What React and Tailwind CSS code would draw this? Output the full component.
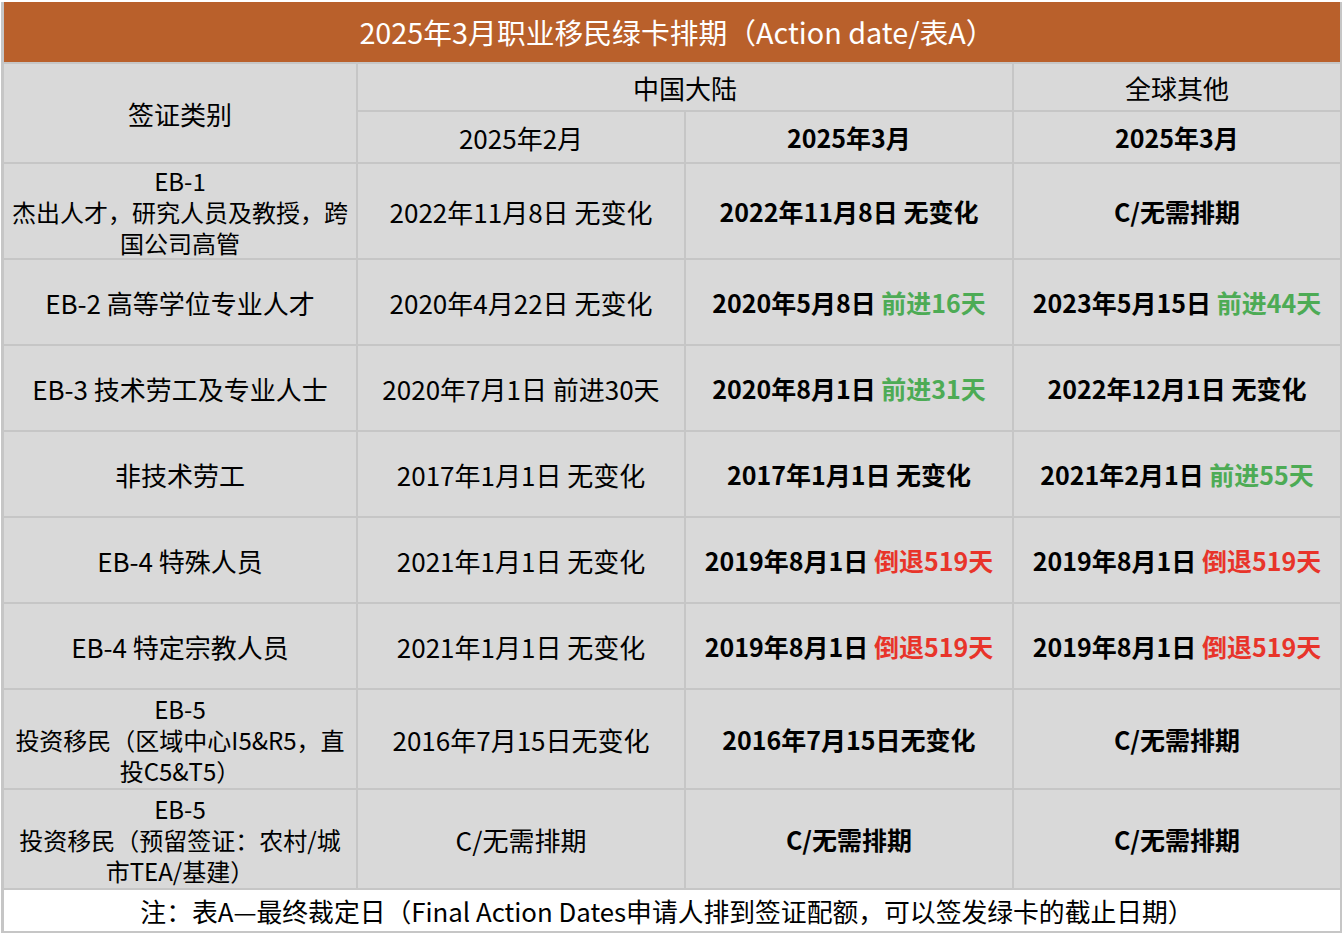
const G = ({ children }) => <span className="text-[#4dab55]">{children}</span>;
const R = ({ children }) => <span className="text-[#e8342a]">{children}</span>;

const rows = [
  {
    h: "h-[94px]",
    small: true,
    label: (
      <>
        EB-1
        <br />
        杰出人才，研究人员及教授，跨
        <br />
        国公司高管
      </>
    ),
    feb: "2022年11月8日 无变化",
    cn: "2022年11月8日 无变化",
    row: "C/无需排期",
  },
  {
    h: "h-[84px]",
    label: "EB-2 高等学位专业人才",
    feb: "2020年4月22日 无变化",
    cn: (
      <>
        2020年5月8日 <G>前进16天</G>
      </>
    ),
    row: (
      <>
        2023年5月15日 <G>前进44天</G>
      </>
    ),
  },
  {
    h: "h-[84px]",
    label: "EB-3 技术劳工及专业人士",
    feb: "2020年7月1日 前进30天",
    cn: (
      <>
        2020年8月1日 <G>前进31天</G>
      </>
    ),
    row: "2022年12月1日 无变化",
  },
  {
    h: "h-[84px]",
    label: "非技术劳工",
    feb: "2017年1月1日 无变化",
    cn: "2017年1月1日 无变化",
    row: (
      <>
        2021年2月1日 <G>前进55天</G>
      </>
    ),
  },
  {
    h: "h-[84px]",
    label: "EB-4 特殊人员",
    feb: "2021年1月1日 无变化",
    cn: (
      <>
        2019年8月1日 <R>倒退519天</R>
      </>
    ),
    row: (
      <>
        2019年8月1日 <R>倒退519天</R>
      </>
    ),
  },
  {
    h: "h-[84px]",
    label: "EB-4 特定宗教人员",
    feb: "2021年1月1日 无变化",
    cn: (
      <>
        2019年8月1日 <R>倒退519天</R>
      </>
    ),
    row: (
      <>
        2019年8月1日 <R>倒退519天</R>
      </>
    ),
  },
  {
    h: "h-[98px]",
    small: true,
    label: (
      <>
        EB-5
        <br />
        投资移民（区域中心I5&amp;R5，直
        <br />
        投C5&amp;T5）
      </>
    ),
    feb: "2016年7月15日无变化",
    cn: "2016年7月15日无变化",
    row: "C/无需排期",
  },
  {
    h: "h-[98px]",
    small: true,
    label: (
      <>
        EB-5
        <br />
        投资移民（预留签证：农村/城
        <br />
        市TEA/基建）
      </>
    ),
    feb: "C/无需排期",
    cn: "C/无需排期",
    row: "C/无需排期",
  },
];

const cell = "bg-[#d9d9d9] flex items-center justify-center text-center whitespace-nowrap";
const bold = "font-bold text-[25px]";

export default function App() {
  return (
    <div
      className="w-[1344px] h-[936px] bg-white pt-[2px] text-black text-[26px] leading-[31px]"
      style={{ fontFamily: '"Noto Sans CJK SC", "Noto Sans", sans-serif' }}
    >
      <div className="ml-[1px] w-[1341px] bg-[#c6c6c6] pl-[3px] pr-[2px] pb-[2px] grid grid-cols-[352px_326px_326px_326px] gap-[2px]">
        {/* title */}
        <div className="col-span-4 h-[60px] bg-[#b9602b] flex items-center justify-center text-white text-[28.8px] pb-[2px] pl-[10px]">
          2025年3月职业移民绿卡排期（Action date/表A）
        </div>

        {/* header */}
        <div className={`${cell} row-span-2`}>签证类别</div>
        <div className={`${cell} col-span-2 h-[46px]`}>中国大陆</div>
        <div className={`${cell} h-[46px]`}>全球其他</div>
        <div className={`${cell} h-[50px]`}>2025年2月</div>
        <div className={`${cell} h-[50px] ${bold}`}>2025年3月</div>
        <div className={`${cell} h-[50px] ${bold}`}>2025年3月</div>

        {rows.map((r, i) => (
          <div key={i} className="contents">
            <div className={`${cell} ${r.h} ${r.small ? "text-[24px]" : ""}`}>
              <div>{r.label}</div>
            </div>
            <div className={`${cell} ${r.h}`}>{r.feb}</div>
            <div className={`${cell} ${r.h} ${bold}`}>
              <div>{r.cn}</div>
            </div>
            <div className={`${cell} ${r.h} ${bold}`}>
              <div>{r.row}</div>
            </div>
          </div>
        ))}

        {/* note */}
        <div className="col-span-4 h-[41px] bg-white flex items-center justify-center text-[25.8px] pr-[10px]">
          注：表A—最终裁定日（Final Action Dates申请人排到签证配额，可以签发绿卡的截止日期）
        </div>
      </div>
    </div>
  );
}
